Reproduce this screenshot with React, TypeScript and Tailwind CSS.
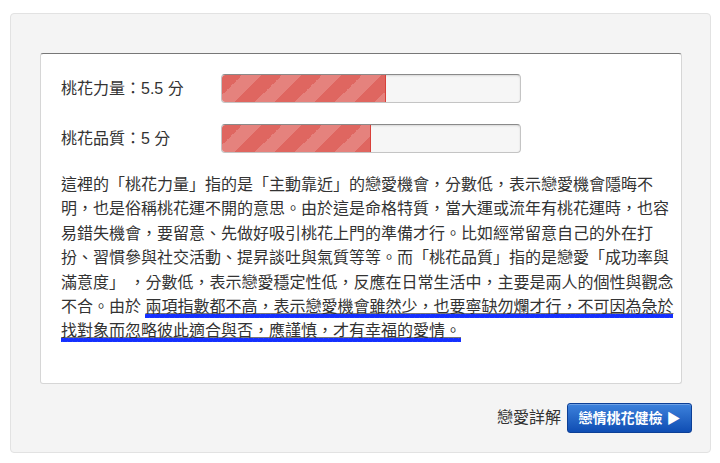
import React from 'react'

const SCORES = [
    { label: '桃花力量：5.5 分', value: 5.5 },
    { label: '桃花品質：5 分', value: 5 },
]

const STRIPES =
    'linear-gradient(-45deg, rgba(255,255,255,.18) 25%, transparent 25%, transparent 50%, rgba(255,255,255,.18) 50%, rgba(255,255,255,.18) 75%, transparent 75%, transparent)'

// tiny blue zigzag, like a grammar-check squiggle
const SQUIGGLE =
    'linear-gradient(135deg, transparent 22%, #1530ff 22%, #1530ff 78%, transparent 78%), linear-gradient(45deg, transparent 22%, #2a44ff 22%, #2a44ff 78%, transparent 78%)'

function ScoreBar({ label, value }: { label: string; value: number }) {
    return (
        <div className="flex items-center h-[29px]">
            <span className="w-[160px] text-[16px] text-[#333]">{label}</span>
            <div className="relative w-[300px] h-[29px] rounded-[4px] bg-[#f6f6f6] border border-[#c4c4c4] border-t-[#8a8a8a] shadow-[inset_0_1px_2px_rgba(0,0,0,0.12)] overflow-hidden">
                <div
                    className="h-full bg-[#df6660] border-r border-[#d8403a] rounded-l-[3px] bg-[length:40px_40px]"
                    style={{ width: `${value * 10}%`, backgroundImage: STRIPES }}
                />
            </div>
        </div>
    )
}

export default function App() {
    return (
        <div className="w-[720px] h-[463px] bg-white pt-[13px] pl-[10px]"
             style={{ fontFamily: '"Liberation Sans", "Noto Sans CJK TC", sans-serif' }}>
            <div className="w-[701px] h-[440px] bg-[#f4f4f4] border border-[#e2e2e2] rounded-[4px] flex flex-col">
                <div className="mt-[39px] ml-[29px] w-[642px] h-[331px] bg-white border border-[#d6d6d6] border-t-[#777] rounded-[3px] pt-[20px] pl-[20px] pr-[4px]">
                    <div className="flex flex-col gap-[21px]">
                        {SCORES.map(s => <ScoreBar key={s.label} {...s} />)}
                    </div>
                    <p className="mt-[20px] w-[616px] text-[16px] leading-[24.4px] text-[#333]">
                        這裡的「桃花力量」指的是「主動靠近」的戀愛機會，分數低，表示戀愛機會隱晦不明，也是俗稱桃花運不開的意思。由於這是命格特質，當大運或流年有桃花運時，也容易錯失機會，要留意、先做好吸引桃花上門的準備才行。比如經常留意自己的外在打扮、習慣參與社交活動、提昇談吐與氣質等等。而「桃花品質」指的是戀愛「成功率與滿意度」 ，分數低，表示戀愛穩定性低，反應在日常生活中，主要是兩人的個性與觀念不合。由於{' '}
                        <span
                            className="pb-[3px] bg-repeat-x bg-[position:left_bottom] bg-[length:5px_4px] underline decoration-[#777] underline-offset-[1px]"
                            style={{ backgroundImage: SQUIGGLE }}>
                            兩項指數都不高，表示戀愛機會雖然少，也要寧缺勿爛才行，不可因為急於找對象而忽略彼此適合與否，應謹慎，才有幸福的愛情。
                        </span>
                    </p>
                </div>
                <div className="flex items-center justify-end gap-[6px] mt-[19px] mr-[18px]">
                    <span className="text-[16px] text-[#333]">戀愛詳解</span>
                    <button className="h-[30px] w-[125px] rounded-[3px] border border-[#0c3f96] bg-gradient-to-b from-[#3d82dc] to-[#0f4db3] text-white text-[14px] font-bold shadow-[inset_0_1px_0_rgba(255,255,255,0.25)]">
                        戀情桃花健檢 ▶
                    </button>
                </div>
            </div>
        </div>
    )
}
